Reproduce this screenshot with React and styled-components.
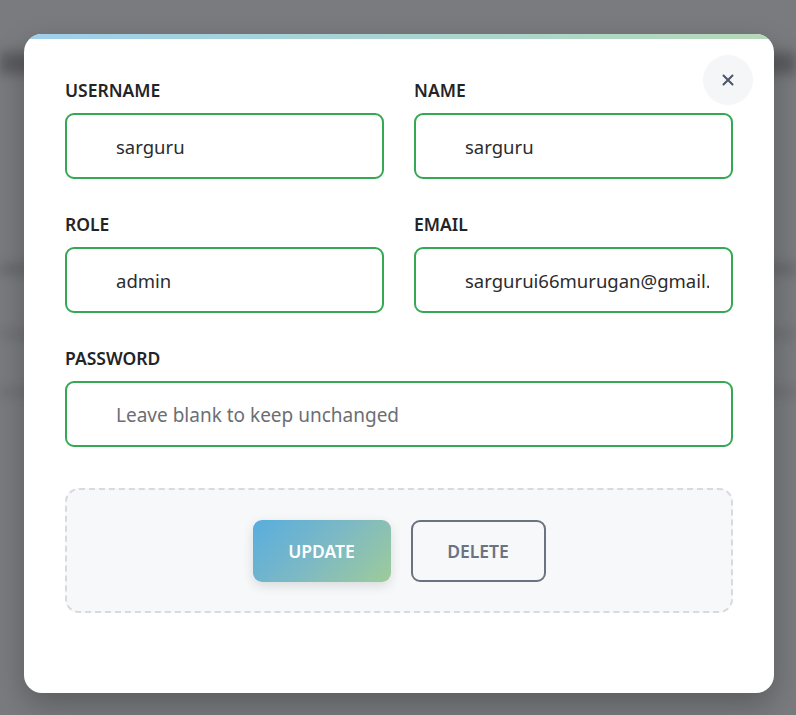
import React from "react";
import styled, { createGlobalStyle } from "styled-components";

const Global = createGlobalStyle`
  html, body { margin: 0; padding: 0; }
  body {
    width: 796px;
    height: 715px;
    overflow: hidden;
    background: #7a7b7e;
    font-family: "Noto Sans", "Open Sans", "Liberation Sans", sans-serif;
  }
  * { box-sizing: border-box; }
`;

const Page = styled.div`
  position: relative;
  width: 796px;
  height: 715px;
  overflow: hidden;
`;

const Blurred = styled.div`
  position: absolute;
  inset: 0;
  filter: blur(6px);
  display: flex;
  flex-direction: column;
  padding-top: 52px;
`;

const BgBand = styled.div`
  height: ${(p) => p.$h}px;
  margin-top: ${(p) => p.$mt}px;
  background: ${(p) => p.$c};
`;

const Overlay = styled.div`
  position: absolute;
  inset: 0;
  display: flex;
  justify-content: flex-start;
  padding: 34px 0 0 24px;
`;

const Modal = styled.div`
  position: relative;
  width: 750px;
  height: 659px;
  background: #ffffff;
  border-radius: 18px;
  overflow: hidden;
  box-shadow: 0 12px 30px rgba(0, 0, 0, 0.25);
  padding: 45px 41px 0 41px;
  &::before {
    content: "";
    position: absolute;
    top: 0;
    left: 0;
    right: 0;
    height: 5px;
    background: linear-gradient(90deg, #9fcfeb, #b5d9b7);
  }
`;

const CloseButton = styled.button`
  position: absolute;
  top: 21px;
  right: 21px;
  width: 50px;
  height: 50px;
  border-radius: 50%;
  border: none;
  background: #f5f6f8;
  color: #4a5568;
  display: flex;
  align-items: center;
  justify-content: center;
  padding: 0;
  cursor: pointer;
`;

const Grid = styled.div`
  display: grid;
  grid-template-columns: 1fr 1fr;
  column-gap: 30px;
  row-gap: 34px;
`;

const Field = styled.div`
  display: flex;
  flex-direction: column;
  gap: 12px;
  grid-column: ${(p) => (p.$full ? "1 / -1" : "auto")};
`;

const Label = styled.label`
  font-size: 17.5px;
  font-weight: 600;
  color: #232427;
  line-height: 22px;
`;

const Input = styled.input`
  width: 100%;
  height: 66px;
  border: 2px solid #34a853;
  border-radius: 9px;
  padding: 0 22px 0 49px;
  font-family: inherit;
  font-size: 18.5px;
  color: #2b2c2f;
  background: #fff;
  outline: none;
  &::placeholder {
    color: #6b6e74;
    font-size: 19px;
  }
`;

const ActionBox = styled.div`
  margin-top: 41px;
  height: 125px;
  border: 2px dashed #d8dadf;
  border-radius: 14px;
  background: #f7f8fa;
  display: flex;
  align-items: center;
  justify-content: center;
  gap: 20px;
`;

const Button = styled.button`
  height: 62px;
  width: ${(p) => p.$w}px;
  border-radius: 9px;
  font-family: inherit;
  font-size: 17.5px;
  font-weight: 600;
  text-transform: uppercase;
  cursor: pointer;
  border: ${(p) => (p.$primary ? "none" : "2px solid #6b7280")};
  color: ${(p) => (p.$primary ? "#ffffff" : "#6b7280")};
  background: ${(p) =>
    p.$primary
      ? "linear-gradient(135deg, #58addf 0%, #7db9c4 50%, #9ecb9a 100%)"
      : "transparent"};
  box-shadow: ${(p) => (p.$primary ? "0 4px 12px rgba(0,0,0,0.12)" : "none")};
`;

export default function App() {
  return (
    <Page>
      <Global />
      <Blurred>
        <BgBand $h={22} $mt={0} $c="#5a5b5e" />
        <BgBand $h={10} $mt={190} $c="#66676a" />
        <BgBand $h={8} $mt={56} $c="#6d6e71" />
        <BgBand $h={8} $mt={50} $c="#6d6e71" />
      </Blurred>
      <Overlay>
        <Modal>
          <CloseButton aria-label="Close">
            <svg width="12" height="12" viewBox="0 0 12 12">
              <path d="M1.5 1.5 L10.5 10.5 M10.5 1.5 L1.5 10.5" stroke="#4a5568" strokeWidth="2" strokeLinecap="round" />
            </svg>
          </CloseButton>
          <Grid>
            <Field>
              <Label>USERNAME</Label>
              <Input defaultValue="sarguru" />
            </Field>
            <Field>
              <Label>NAME</Label>
              <Input defaultValue="sarguru" />
            </Field>
            <Field>
              <Label>ROLE</Label>
              <Input defaultValue="admin" />
            </Field>
            <Field>
              <Label>EMAIL</Label>
              <Input defaultValue="sargurui66murugan@gmail.com" />
            </Field>
            <Field $full>
              <Label>PASSWORD</Label>
              <Input type="password" placeholder="Leave blank to keep unchanged" />
            </Field>
          </Grid>
          <ActionBox>
            <Button $primary $w={138}>Update</Button>
            <Button $w={135}>Delete</Button>
          </ActionBox>
        </Modal>
      </Overlay>
    </Page>
  );
}
